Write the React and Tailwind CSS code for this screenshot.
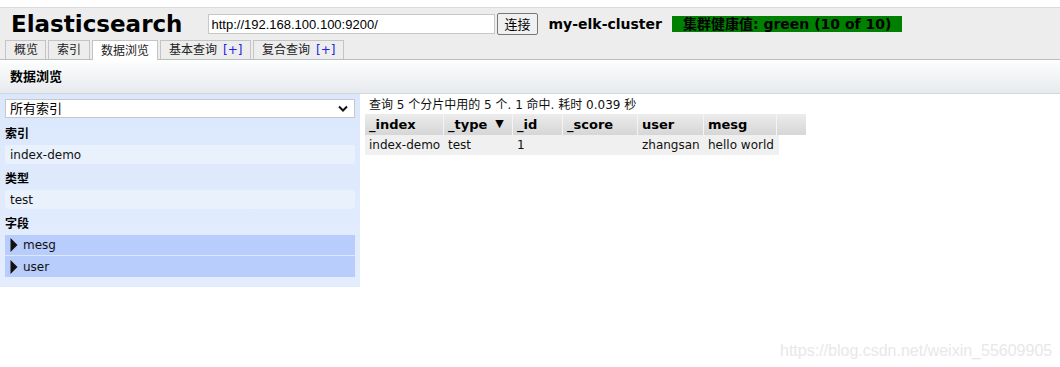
import React from 'react'

const cjk = "font-['DejaVu_Sans','Noto_Sans_CJK_SC',sans-serif]"

function Tab({ label, plus, active, w }) {
  return (
    <div
      className={`relative flex items-center border border-b-0 border-[#c4c4c4] pl-[8px] text-[12px] text-[#222] ${w} ${
        active ? 'z-10 -mb-px h-[20px] bg-white' : 'h-[19px] bg-[#ededed]'
      }`}
    >
      {label}
      {plus && <span className="ml-[6px] text-[#2222dd]">[+]</span>}
    </div>
  )
}

function Triangle() {
  return (
    <svg width="8" height="14" viewBox="0 0 8 14" className="mr-[5px]">
      <path d="M0.5 0 L7.5 7 L0.5 14 Z" fill="#111" />
    </svg>
  )
}

const cols = [
  { key: '_index', w: 'w-[79px]' },
  { key: '_type', w: 'w-[69px]', sort: true },
  { key: '_id', w: 'w-[50px]' },
  { key: '_score', w: 'w-[75px]' },
  { key: 'user', w: 'w-[66px]' },
  { key: 'mesg', w: 'w-[73px]' },
]

const row = ['index-demo', 'test', '1', '', 'zhangsan', 'hello world']

export default function App() {
  return (
    <div className={`relative h-[367px] w-[1060px] overflow-hidden bg-white ${cjk}`}>
      <div className="h-[7px] bg-white" />
      <div className="border-t border-[#dadada] bg-[#ededed]">
        <div className="flex h-[32px] items-center">
          <h1 className="ml-[11px] text-[23px] font-bold leading-none text-black">Elasticsearch</h1>
          <input
            readOnly
            value="http://192.168.100.100:9200/"
            className="ml-[26px] h-[20px] w-[287px] border border-[#c8c8c8] bg-white px-[2px] font-['Liberation_Sans',sans-serif] text-[13px] text-black outline-none"
          />
          <button
            type="button"
            className="ml-[2px] h-[22px] rounded-[2px] border border-[#777] bg-[#f0f0f0] px-[6px] text-[13px] leading-none text-black"
          >
            连接
          </button>
          <span className="ml-[11px] text-[14px] font-bold text-black">my-elk-cluster</span>
          <span className="ml-[10px] flex h-[16px] w-[230px] items-center bg-[#008000] pl-[11px] text-[14px] font-bold leading-none text-black">
            集群健康值: green (10 of 10)
          </span>
        </div>
        <div className="flex h-[20px] items-end gap-[2px] border-b border-[#bcbcbc] pl-[5px]">
          <Tab label="概览" w="w-[41px]" />
          <Tab label="索引" w="w-[42px]" />
          <Tab label="数据浏览" w="w-[66px]" active />
          <Tab label="基本查询" w="w-[91px]" plus />
          <Tab label="复合查询" w="w-[91px]" plus />
        </div>
      </div>
      <div className="flex h-[34px] items-center border-b border-[#d4d8dc] bg-gradient-to-b from-[#fdfefe] to-[#e7eaed] pl-[10px] text-[13px] font-bold text-black">
        数据浏览
      </div>
      <div className="flex">
        <div className="w-[360px] bg-gradient-to-b from-[#dbe7fc] to-[#e3edfd] px-[5px] pb-[10px] pt-[5px]">
          <div className="flex h-[19px] items-center justify-between border border-[#c8c8c8] bg-white pl-[4px] pr-[6px] text-[13px] text-black">
            <span>所有索引</span>
            <svg width="10" height="7" viewBox="0 0 10 7">
              <path d="M1 1.5 L5 5.5 L9 1.5" stroke="#111" strokeWidth="2" fill="none" />
            </svg>
          </div>
          <div className="mt-[4px] h-[23px] pt-[3px] text-[12px] font-bold leading-[18px] text-black">索引</div>
          <div className="flex h-[19px] items-center rounded-[3px] bg-[#e9f1fd] pl-[5px] text-[12px] text-[#111]">index-demo</div>
          <div className="mt-[3px] h-[23px] pt-[3px] text-[12px] font-bold leading-[18px] text-black">类型</div>
          <div className="flex h-[19px] items-center rounded-[3px] bg-[#e9f1fd] pl-[5px] text-[12px] text-[#111]">test</div>
          <div className="mt-[3px] h-[23px] pt-[3px] text-[12px] font-bold leading-[18px] text-black">字段</div>
          <div className="flex h-[21px] items-center border-b border-[#dce7fc] bg-[#b8cdfc] pl-[5px] text-[12px] text-[#111]">
            <Triangle />
            mesg
          </div>
          <div className="flex h-[21px] items-center bg-[#b8cdfc] pl-[5px] text-[12px] text-[#111]">
            <Triangle />
            user
          </div>
        </div>
        <div className="ml-[5px] pt-[3px]">
          <div className="h-[17px] pl-[4px] text-[12px] leading-[17px] text-[#111]">
            查询 5 个分片中用的 5 个. 1 命中. 耗时 0.039 秒
          </div>
          <div className="flex h-[21px]">
            {cols.map((c) => (
              <div
                key={c.key}
                className={`${c.w} flex items-center border-r border-[#f4f4f4] bg-gradient-to-b from-[#ececec] to-[#d6d6d6] pl-[4px] text-[13px] font-bold text-black`}
              >
                {c.key}
                {c.sort && <span className="ml-[8px] text-[11px]">▼</span>}
              </div>
            ))}
            <div className="w-[29px] bg-gradient-to-b from-[#ececec] to-[#d6d6d6]" />
          </div>
          <div className="flex h-[20px] w-[414px] bg-[#f0f0f0]">
            {cols.map((c, i) => (
              <div key={c.key} className={`${c.w} flex items-center pl-[4px] text-[12px] text-[#111]`}>
                {row[i]}
              </div>
            ))}
          </div>
        </div>
      </div>
      <div className="absolute left-[780px] top-[339px] font-['Liberation_Sans',sans-serif] text-[16px] text-[#e8e8e8]">
        https://blog.csdn.net/weixin_55609905
      </div>
    </div>
  )
}
